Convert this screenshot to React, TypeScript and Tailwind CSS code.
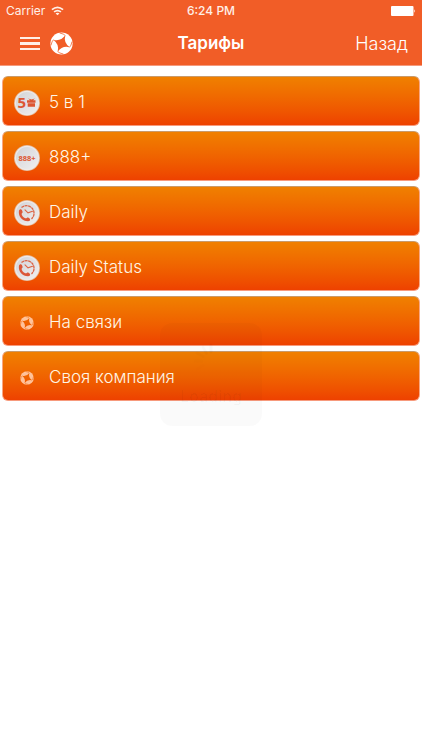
import React from "react";

const FONT = "font-['Inter','Noto_Sans',sans-serif]";

function Swirl({ className }: { className: string }) {
  return (
    <svg viewBox="0 0 24 24" className={className} aria-hidden="true">
      <mask id="swirl">
        <circle cx="12" cy="12" r="11.600" fill="white" />
        <path d="M16 3.400Q13.800 11 20.600 16Q13 13.800 8 20.600Q10.200 13 3.400 8Q11 10.200 16 3.400Z" fill="black" />
        {[0, 90, 180, 270].map((a) => (
          <path key={a} d="M16 3.700Q14.500 1.900 10 1" fill="none" stroke="black" strokeWidth=".8" transform={`rotate(${a} 12 12)`} />
        ))}
      </mask>
      <rect width="24" height="24" fill="currentColor" mask="url(#swirl)" />
    </svg>
  );
}

function Disc({ children }: { children: React.ReactNode }) {
  return (
    <svg viewBox="0 0 26 26" className="size-[26px]" aria-hidden="true">
      <defs>
        <linearGradient id="disc" x1="0" y1="0" x2="1" y2="1">
          <stop offset="0" stopColor="#d2d3d8" />
          <stop offset="1" stopColor="#f0eeee" />
        </linearGradient>
      </defs>
      <circle cx="13" cy="13" r="13" fill="#e3b696" />
      <circle cx="13" cy="13" r="12.200" fill="#eeeae8" />
      <circle cx="13" cy="13" r="11" fill="url(#disc)" />
      {children}
    </svg>
  );
}

function PhoneClock() {
  return (
    <Disc>
      <g fill="none" stroke="#dc6547">
        <path d="M7.500 7.600A7.300 7.300 0 1 1 17.500 18.900" strokeWidth="1.300" strokeDasharray="3 .5" />
        <path d="M11 9.800L14 12.800L18.500 11.300" strokeWidth="1.100" strokeLinecap="round" />
      </g>
      <path d="M4.900 11C4.200 16.500 8.500 21.300 14 21.300C15.800 21.300 16.600 19.800 15.900 18.700L14.200 17.600C13.200 17.100 12.500 18.600 11.300 18.200C9.300 17.500 7.800 15.700 7.600 14C7.500 13.100 8.900 12.700 8.600 11.700L7.900 9.900C7.100 8.800 5.200 9.200 4.900 11Z" fill="#dc5738" />
    </Disc>
  );
}

function FiveGift() {
  return (
    <Disc>
      <text x="3.500" y="18.300" fontSize="15" fontWeight="700" fill="#dd5632" fontFamily="Open Sans, Noto Sans, sans-serif">5</text>
      <path d="M13 10.200h3.200l-2-1.700 3.300 .9 3.300-.9-1.800 1.700h2.500v2.600h-8.500zM13.700 13.200h7.300v3.600h-7.300z" fill="#dd5632" />
    </Disc>
  );
}

function TripleEight() {
  return (
    <Disc>
      <text x="13" y="15.500" fontSize="7.500" fontWeight="700" textAnchor="middle" fill="#dd5632" fontFamily="Open Sans, Noto Sans, sans-serif">888+</text>
    </Disc>
  );
}

const small = <Swirl className="size-[14px] text-[#ffc29a]" />;
const tariffs = [
  { name: "5 в 1", icon: <FiveGift /> },
  { name: "888+", icon: <TripleEight /> },
  { name: "Daily", icon: <PhoneClock /> },
  { name: "Daily Status", icon: <PhoneClock /> },
  { name: "На связи", icon: small },
  { name: "Своя компания", icon: small },
];

export default function App() {
  return (
    <div className={`relative min-h-screen bg-white ${FONT}`}>
      <header className="border-b border-[#f59a7d] bg-[#f15d27] text-white">
        <div className="grid h-[22px] grid-cols-3 items-center px-1.5 text-xs text-[#fff0e8]">
          <span className="flex items-center gap-1.5">
            Carrier
            <svg viewBox="0 0 14 10" className="h-[10px] w-[13px]" fill="none" stroke="currentColor" strokeWidth="1.800" aria-hidden="true">
              <path d="M1 3.600Q7-1.600 13 3.600M3.300 6Q7 3 10.700 6" />
              <path d="M7 9.500L4.900 7.600Q7 6.200 9.100 7.600Z" fill="currentColor" stroke="none" />
            </svg>
          </span>
          <span className="text-center font-medium">6:24 PM</span>
          <svg viewBox="0 0 25 10" className="h-[10px] w-[25px] justify-self-end" fill="white" aria-hidden="true">
            <rect width="22.500" height="10" rx="1" />
            <path d="M23.300 3.300Q25 5 23.300 6.700Z" />
          </svg>
        </div>
        <div className="grid h-[43px] grid-cols-3 items-center px-3.5">
          <div className="flex items-center gap-2.5 pl-1.5">
            <button type="button" aria-label="Меню" className="flex w-5 flex-col gap-[3px]">
              <span className="h-[2px] w-full bg-[#fff0e8]" />
              <span className="h-[3px] w-full bg-[#fff0e8]" />
              <span className="h-[2px] w-full bg-[#fff0e8]" />
            </button>
            <Swirl className="size-[23px]" />
          </div>
          <h1 className="text-center text-[17px] font-semibold">Тарифы</h1>
          <button type="button" className="justify-self-end text-lg font-light">Назад</button>
        </div>
      </header>
      <main>
        <ul className="flex flex-col gap-[5px] px-0.5 pt-[10px]">
          {tariffs.map((t) => (
            <li key={t.name}>
              <button
                type="button"
                className="flex h-[50px] w-full items-center gap-2 rounded-md border border-t-[#c99a6a] border-r-[#f9a682] border-b-[#f79a7c] border-l-[#f9a682] bg-linear-to-b from-[#f08000] to-[#ee4100] pt-[3px] pl-[10px] text-left text-[17px] font-light text-[#fff6e6]"
              >
                <span className="flex w-[28px] justify-center">{t.icon}</span>
                {t.name}
              </button>
            </li>
          ))}
        </ul>
      </main>
      <div role="status" className="pointer-events-none absolute top-[323px] left-1/2 flex h-[103px] w-[102px] -translate-x-1/2 flex-col items-center justify-between rounded-xl bg-black/2 pt-5 pb-5 text-base font-semibold text-black/3">
        <svg viewBox="0 0 36 36" className="size-9" stroke="currentColor" strokeWidth="3" strokeLinecap="round" aria-hidden="true">
          {[240, 270, 300, 330, 0].map((a, i) => (
            <path key={a} d="M18 2V9" opacity={0.2 + i * 0.15} transform={`rotate(${a} 18 18)`} />
          ))}
        </svg>
        <span className="leading-5">Loading</span>
      </div>
    </div>
  );
}
